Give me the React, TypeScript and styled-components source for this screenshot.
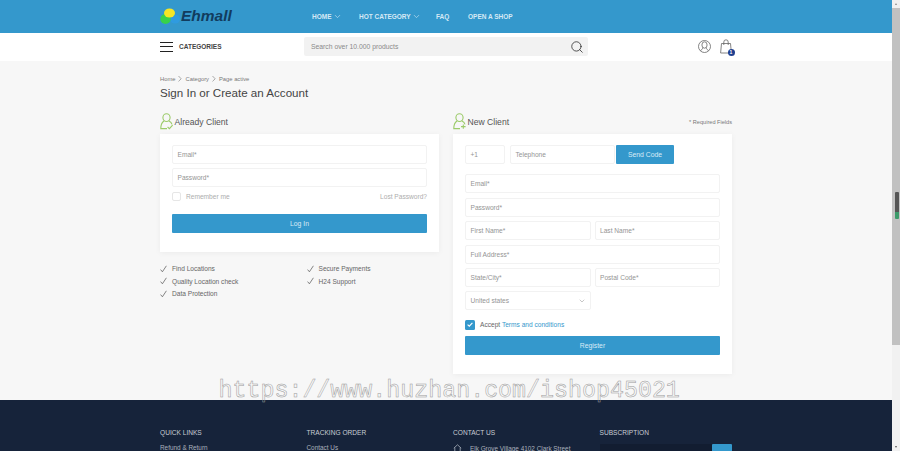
import React from "react";
import styled, { createGlobalStyle } from "styled-components";
import { ChevronDown, Search } from "lucide-react";

const blue = "#3498cc";
const font = `"Liberation Sans", Arial, sans-serif`;

const GlobalStyle = createGlobalStyle`
  html, body {
    margin: 0;
    padding: 0;
    overflow: hidden;
    background: #f7f7f7;
    font-family: ${font};
  }
  * { box-sizing: border-box; }
`;

const Page = styled.div`
  width: 892px;
  height: 451px;
  overflow: hidden;
  position: relative;
`;

const TopBar = styled.header`
  height: 32.5px;
  background: ${blue};
  padding-left: 160px;
  display: flex;
  align-items: center;
`;

const Logo = styled.div`
  width: 152px;
  display: flex;
  align-items: center;
`;

const LogoText = styled.span`
  font-size: 15.5px;
  font-weight: 700;
  font-style: italic;
  color: #123c5e;
  margin-left: 1px;
`;

const Nav = styled.nav`
  display: flex;
  align-items: center;
`;

const NavItem = styled.a<{ $w: number }>`
  width: ${({ $w }) => $w}px;
  display: flex;
  align-items: center;
  gap: 1px;
  font-size: 6.5px;
  font-weight: 700;
  color: #d5e9f5;
  white-space: nowrap;
`;

const SubBar = styled.div`
  height: 28.5px;
  background: #fff;
  padding-left: 160px;
  display: flex;
  align-items: center;
`;

const Burger = styled.span`
  width: 13px;
  height: 10px;
  border-top: 1.2px solid #222;
  border-bottom: 1.2px solid #222;
  position: relative;
  &::after {
    content: "";
    position: absolute;
    left: 0;
    right: 0;
    top: 3.2px;
    height: 1.2px;
    background: #222;
  }
`;

const CategoriesLabel = styled.span`
  width: 125px;
  margin-left: 6px;
  font-size: 6.5px;
  font-weight: 700;
  color: #444;
`;

const SearchBox = styled.div`
  width: 284px;
  height: 19px;
  background: #f2f2f2;
  border-radius: 2px;
  padding: 0 4px 0 7px;
  display: flex;
  align-items: center;
  justify-content: space-between;
  font-size: 6.8px;
  color: #8a8a8a;
`;

const UserIcons = styled.div`
  margin-left: 110px;
  display: flex;
  align-items: center;
  gap: 9px;
`;

const BagWrap = styled.span`
  position: relative;
  display: flex;
`;

const BagBadge = styled.span`
  position: absolute;
  right: -2.5px;
  bottom: -2px;
  width: 7px;
  height: 7px;
  border-radius: 50%;
  background: #1f3f8f;
  color: #fff;
  font-size: 5px;
  font-weight: 700;
  line-height: 7px;
  text-align: center;
`;

const Main = styled.main`
  padding: 13.5px 160px 26px;
  background: #f7f7f7;
`;

const Breadcrumb = styled.div`
  height: 8px;
  display: flex;
  align-items: center;
  gap: 2px;
  font-size: 5.8px;
  line-height: 8px;
  color: #777;
`;

const Title = styled.h1`
  margin: 2px 0 0;
  height: 16px;
  font-size: 11.6px;
  line-height: 16px;
  font-weight: 400;
  color: #444;
`;

const Columns = styled.div`
  margin-top: 13px;
  display: grid;
  grid-template-columns: 279px 279px;
  column-gap: 14px;
  align-items: start;
`;

const SectionHead = styled.div`
  height: 16px;
  margin-bottom: 4px;
  display: flex;
  align-items: center;
  gap: 1.5px;
  font-size: 8.6px;
  color: #555;
`;

const Required = styled.span`
  margin-left: auto;
  font-size: 5.6px;
  color: #777;
`;

const Card = styled.section<{ $h: number }>`
  height: ${({ $h }) => $h}px;
  background: #fff;
  padding: 11px 12px;
  box-shadow: 0 1px 6px rgba(0, 0, 0, 0.05);
  display: grid;
  align-content: start;
  row-gap: 4.4px;
`;

const Field = styled.div<{ $w?: number }>`
  height: 19px;
  flex: ${({ $w }) => ($w ? `0 0 ${$w}px` : "1 1 0")};
  border: 1px solid #f2f2f2;
  border-radius: 2px;
  padding: 0 4.5px;
  display: flex;
  align-items: center;
  justify-content: space-between;
  font-size: 6.6px;
  color: #949494;
  background: #fff;
`;

const Row = styled.div<{ $gap?: number; $after?: number }>`
  display: flex;
  align-items: center;
  gap: ${({ $gap }) => $gap ?? 4}px;
  margin-bottom: ${({ $after }) => $after ?? 0}px;
`;

const RememberRow = styled.div`
  display: flex;
  align-items: center;
  height: 10px;
  margin-bottom: 8px;
  font-size: 6.6px;
  color: #adadad;
`;

const Box = styled.span`
  width: 9px;
  height: 9px;
  margin-right: 5px;
  border: 1px solid #e6e6e6;
  border-radius: 2px;
`;

const Lost = styled.span`
  margin-left: auto;
`;

const PrimaryButton = styled.div`
  height: 19px;
  background: ${blue};
  border-radius: 1px;
  color: #d9ebf6;
  font-size: 6.8px;
  line-height: 19px;
  text-align: center;
`;

const SendCode = styled(PrimaryButton)`
  width: 58px;
  margin-left: -4px;
`;

const Features = styled.ul`
  list-style: none;
  margin: 11px 0 0;
  padding: 0;
  display: grid;
  grid-template-columns: 146.5px 1fr;
  grid-auto-rows: 12.5px;
`;

const Feature = styled.li`
  display: flex;
  align-items: center;
  gap: 5px;
  font-size: 6.6px;
  color: #666;
`;

const Spacer = styled.li``;

const AcceptRow = styled.div`
  display: flex;
  align-items: center;
  gap: 5px;
  height: 10px;
  margin: 5px 0 2px;
  font-size: 6.6px;
  color: #666;
`;

const CheckedBox = styled.span`
  width: 10px;
  height: 10px;
  border-radius: 1.5px;
  background: ${blue};
  display: flex;
  align-items: center;
  justify-content: center;
`;

const TermsLink = styled.span`
  color: ${blue};
`;

const Footer = styled.footer`
  height: 51px;
  background: #16233a;
  padding: 27px 0 0 160px;
  display: grid;
  grid-template-columns: 146.5px 146.5px 146.5px 1fr;
`;

const FooterCol = styled.div`
  display: flex;
  flex-direction: column;
  gap: 5px;
`;

const FooterTitle = styled.div`
  height: 12px;
  font-size: 6.6px;
  line-height: 12px;
  color: #c9ced6;
`;

const FooterLink = styled.div`
  display: flex;
  align-items: center;
  gap: 8px;
  font-size: 6.4px;
  color: #aab1bc;
  white-space: nowrap;
`;

const Subscribe = styled.div`
  width: 132px;
  height: 12px;
  display: flex;
  justify-content: flex-end;
  background: #121d31;
  border-radius: 1px;
`;

const SubscribeButton = styled.span`
  width: 20px;
  height: 12px;
  background: ${blue};
  border-radius: 1px;
`;

const Scrollbar = styled.div`
  position: fixed;
  top: 0;
  right: 0;
  width: 8px;
  height: 451px;
  background: #f1f1f1;
`;

const ScrollThumb = styled.div`
  position: absolute;
  top: 8px;
  left: 0;
  width: 100%;
  height: 337px;
  background: #c1c1c1;
`;

const ScrollMark = styled.div`
  position: absolute;
  top: 192px;
  left: 3px;
  width: 4px;
  height: 27px;
  border-radius: 1px;
  background: linear-gradient(#555 0 75%, #3c9a6a 75% 100%);
`;

const ScrollArrow = styled.span<{ $down?: boolean }>`
  position: absolute;
  left: 2.5px;
  ${({ $down }) => ($down ? "bottom: 3px;" : "top: 3px;")}
  width: 0;
  height: 0;
  border-left: 1.5px solid transparent;
  border-right: 1.5px solid transparent;
  ${({ $down }) =>
    $down ? "border-top: 2px solid #555;" : "border-bottom: 2px solid #888;"}
`;

const Watermark = styled.div`
  position: absolute;
  left: 218.5px;
  top: 377px;
  font-family: "Liberation Mono", monospace;
  font-size: 23.3px;
  line-height: 28px;
  color: transparent;
  -webkit-text-stroke: 0.5px #999;
  white-space: nowrap;
  pointer-events: none;
`;

const LogoMark = () => (
  <svg width="20" height="17" viewBox="0 0 20 17">
    <ellipse cx="15" cy="11" rx="5" ry="4.5" fill="#2f9be0" />
    <ellipse cx="5.5" cy="11" rx="5.2" ry="5" fill="#37d24a" />
    <ellipse cx="9.5" cy="5" rx="5.5" ry="4.6" fill="#f5e625" />
  </svg>
);

const UserIcon = () => (
  <svg width="13" height="13" viewBox="0 0 13 13" fill="none" stroke="#666" strokeWidth="0.8">
    <circle cx="6.5" cy="6.5" r="6" />
    <ellipse cx="6.5" cy="5" rx="2.6" ry="3.2" />
    <path d="M4.8 7.6 C4.6 9.4 3.2 10 2.4 10.6 M8.2 7.6 C8.4 9.4 9.8 10 10.6 10.6" />
  </svg>
);

const BagIcon = () => (
  <svg width="12" height="15" viewBox="0 0 12 15" fill="none" stroke="#666" strokeWidth="0.8">
    <path d="M1.5 4.5 H10.5 L11.4 14 H0.6 Z" />
    <path d="M3.8 6 V3 A2.2 2.2 0 0 1 8.2 3 V6" />
  </svg>
);

const ClientIcon = ({ plus }: { plus?: boolean }) => (
  <svg width="13" height="17" viewBox="0 0 13 17" fill="none" stroke="#9ccb6a" strokeWidth="1.1">
    <ellipse cx="6.5" cy="4.6" rx="3.6" ry="3.9" />
    <path d="M4 8 C1.8 9.4 0.8 12 0.8 15.6 H7" />
    <path d="M9 8 C10.6 8.8 11.6 10 12 11.4" />
    {plus ? (
      <path d="M8 13.6 H12.6 M10.3 11.4 V15.8" />
    ) : (
      <path d="M7.6 14 L9.4 15.6 L12.6 12" />
    )}
  </svg>
);

const Crumb = () => (
  <svg width="6" height="7" viewBox="0 0 6 7" fill="none" stroke="#888" strokeWidth="0.7">
    <path d="M1.5 1 L4.2 3.8 L1.5 6.4" />
  </svg>
);

const Tick = () => (
  <svg width="7" height="8" viewBox="0 0 7 8" fill="none" stroke="#666" strokeWidth="0.8">
    <path d="M0.6 4.6 L2.4 6.8 L6.4 0.8" />
  </svg>
);

const HomeIcon = () => (
  <svg width="9" height="9" viewBox="0 0 9 9" fill="none" stroke="#aab1bc" strokeWidth="0.8">
    <path d="M0.8 4.2 L4.5 0.8 L8.2 4.2 M1.8 3.6 V8.4 H7.2 V3.6" />
  </svg>
);

export default function App() {
  return (
    <Page>
      <GlobalStyle />
      <TopBar>
        <Logo>
          <LogoMark />
          <LogoText>Ehmall</LogoText>
        </Logo>
        <Nav>
          <NavItem $w={47}>
            HOME <ChevronDown size={9} strokeWidth={1.6} />
          </NavItem>
          <NavItem $w={77}>
            HOT CATEGORY <ChevronDown size={9} strokeWidth={1.6} />
          </NavItem>
          <NavItem $w={32}>FAQ</NavItem>
          <NavItem $w={60}>OPEN A SHOP</NavItem>
        </Nav>
      </TopBar>

      <SubBar>
        <Burger />
        <CategoriesLabel>CATEGORIES</CategoriesLabel>
        <SearchBox>
          Search over 10.000 products
          <Search size={14} color="#222" strokeWidth={1.3} />
        </SearchBox>
        <UserIcons>
          <UserIcon />
          <BagWrap>
            <BagIcon />
            <BagBadge>1</BagBadge>
          </BagWrap>
        </UserIcons>
      </SubBar>

      <Main>
        <Breadcrumb>
          Home <Crumb /> Category <Crumb /> Page active
        </Breadcrumb>
        <Title>Sign In or Create an Account</Title>
        <Columns>
          <div>
            <SectionHead>
              <ClientIcon />
              Already Client
            </SectionHead>
            <Card $h={118}>
              <Field>Email*</Field>
              <Field>Password*</Field>
              <RememberRow>
                <Box />
                Remember me
                <Lost>Lost Password?</Lost>
              </RememberRow>
              <PrimaryButton>Log In</PrimaryButton>
            </Card>
            <Features>
              <Feature><Tick />Find Locations</Feature>
              <Feature><Tick />Secure Payments</Feature>
              <Feature><Tick />Quality Location check</Feature>
              <Feature><Tick />H24 Support</Feature>
              <Feature><Tick />Data Protection</Feature>
              <Spacer />
            </Features>
          </div>
          <div>
            <SectionHead>
              <ClientIcon plus />
              New Client
              <Required>* Required Fields</Required>
            </SectionHead>
            <Card $h={240}>
              <Row $gap={5} $after={6.6}>
                <Field $w={40}>+1</Field>
                <Field $w={105}>Telephone</Field>
                <SendCode>Send Code</SendCode>
              </Row>
              <Field>Email*</Field>
              <Field>Password*</Field>
              <Row>
                <Field>First Name*</Field>
                <Field>Last Name*</Field>
              </Row>
              <Field>Full Address*</Field>
              <Row>
                <Field>State/City*</Field>
                <Field>Postal Code*</Field>
              </Row>
              <Row>
                <Field $w={126}>
                  United states
                  <ChevronDown size={8} strokeWidth={1} color="#555" />
                </Field>
              </Row>
              <AcceptRow>
                <CheckedBox>
                  <svg width="6" height="5" viewBox="0 0 6 5" fill="none" stroke="#fff" strokeWidth="1.1">
                    <path d="M0.6 2.6 L2.3 4.2 L5.4 0.8" />
                  </svg>
                </CheckedBox>
                <span>
                  Accept <TermsLink>Terms and conditions</TermsLink>
                </span>
              </AcceptRow>
              <PrimaryButton>Register</PrimaryButton>
            </Card>
          </div>
        </Columns>
      </Main>

      <Footer>
        <FooterCol>
          <FooterTitle>QUICK LINKS</FooterTitle>
          <FooterLink>Refund &amp; Return</FooterLink>
        </FooterCol>
        <FooterCol>
          <FooterTitle>TRACKING ORDER</FooterTitle>
          <FooterLink>Contact Us</FooterLink>
        </FooterCol>
        <FooterCol>
          <FooterTitle>CONTACT US</FooterTitle>
          <FooterLink>
            <HomeIcon />
            Elk Grove Village 4102 Clark Street
          </FooterLink>
        </FooterCol>
        <FooterCol>
          <FooterTitle>SUBSCRIPTION</FooterTitle>
          <Subscribe>
            <SubscribeButton />
          </Subscribe>
        </FooterCol>
      </Footer>

      <Watermark>https://www.huzhan.com/ishop45021</Watermark>
      <Scrollbar>
        <ScrollArrow />
        <ScrollThumb />
        <ScrollMark />
        <ScrollArrow $down />
      </Scrollbar>
    </Page>
  );
}
